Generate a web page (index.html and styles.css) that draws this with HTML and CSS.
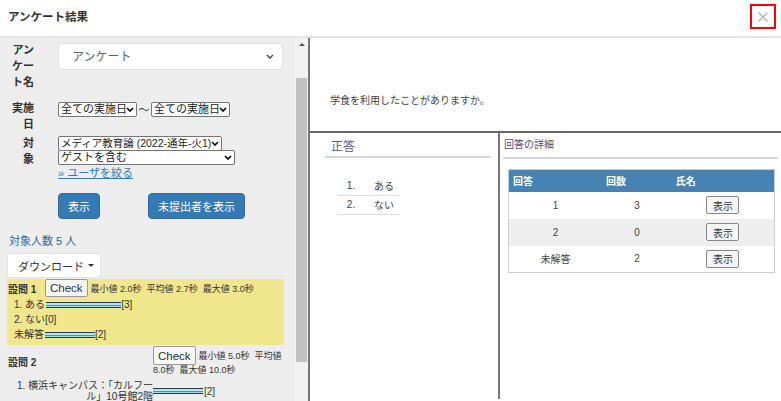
FILE: index.html
```html
<!DOCTYPE html>
<html lang="ja">
<head>
<meta charset="utf-8">
<title>アンケート結果</title>
<link rel="stylesheet" href="styles.css">
</head>
<body>
<div class="header">
  <h1 class="title">アンケート結果</h1>
  <button class="close" type="button" aria-label="閉じる">
    <svg width="12" height="12" viewBox="0 0 12 12"><path d="M1.5 1.5l9 9M10.5 1.5l-9 9" stroke="#bbb" stroke-width="1.6" fill="none"/></svg>
  </button>
</div>
<div class="main">
  <div class="left">
    <div class="lc">
      <div class="frow r1">
        <div class="flabel">アンケート名</div>
        <select class="big"><option>アンケート</option></select>
      </div>
      <div class="frow r2">
        <div class="flabel">実施日</div>
        <div class="dates">
          <select class="sm date"><option>全ての実施日</option></select>
          <span class="tilde">〜</span>
          <select class="sm date"><option>全ての実施日</option></select>
        </div>
      </div>
      <div class="frow r3">
        <div class="flabel">対<br>象</div>
        <div class="fcol">
          <select class="sm course"><option>メディア教育論 (2022-通年-火1)</option></select>
          <select class="sm guest"><option>ゲストを含む</option></select>
          <a class="filter" href="#">» ユーザを絞る</a>
        </div>
      </div>
      <div class="actions">
        <button class="btn-blue" type="button">表示</button>
        <button class="btn-blue" type="button">未提出者を表示</button>
      </div>
      <div class="count">対象人数 5 人</div>
      <button class="dl" type="button">ダウンロード <span class="caret"></span></button>
      <div class="q q1">
        <div class="qhead">
          <span class="qtitle">設問 1</span>
          <button class="check" type="button">Check</button>
          <span class="stats">最小値 2.0秒&nbsp; 平均値 2.7秒&nbsp; 最大値 3.0秒</span>
        </div>
        <div class="opt">1. ある<span class="bar" style="width:75px"></span>[3]</div>
        <div class="opt">2. ない[0]</div>
        <div class="opt">未解答<span class="bar" style="width:50px"></span>[2]</div>
      </div>
      <div class="q q2">
        <div class="qhead2">
          <span class="qtitle">設問 2</span>
          <div class="qright">
            <div class="qr1"><button class="check" type="button">Check</button><span class="stats">最小値 5.0秒&nbsp; 平均値</span></div>
            <div class="qr2">8.0秒&nbsp; 最大値 10.0秒</div>
          </div>
        </div>
        <div class="opt2">
          <div class="optlabel">1. 横浜キャンパス：「カルフー<br>ル」10号館2階</div>
          <span class="bar" style="width:50px"></span><span class="cnt">[2]</span>
        </div>
      </div>
    </div>
    <div class="sb">
      <div class="sb-arrow"></div>
      <div class="sb-thumb"></div>
    </div>
  </div>
  <div class="right">
    <div class="question">学食を利用したことがありますか。</div>
    <div class="lower">
      <div class="correct">
        <h2 class="chead">正答</h2>
        <table class="ans">
          <tr><td class="n">1.</td><td class="t">ある</td></tr>
          <tr><td class="n">2.</td><td class="t">ない</td></tr>
        </table>
      </div>
      <div class="detail">
        <h2 class="dhead">回答の詳細</h2>
        <table class="dt">
          <thead>
            <tr><th class="c1">回答</th><th class="c2">回数</th><th class="c3">氏名</th></tr>
          </thead>
          <tbody>
            <tr><td>1</td><td>3</td><td><button class="show" type="button">表示</button></td></tr>
            <tr class="alt"><td>2</td><td>0</td><td><button class="show" type="button">表示</button></td></tr>
            <tr><td>未解答</td><td>2</td><td><button class="show" type="button">表示</button></td></tr>
          </tbody>
        </table>
      </div>
    </div>
  </div>
</div>
</body>
</html>
```
FILE: styles.css
```css
* { box-sizing: border-box; }
html, body { margin: 0; padding: 0; }
body {
  width: 781px;
  height: 401px;
  overflow: hidden;
  background: #fff;
  color: #333;
  font-family: "Liberation Sans", "Noto Sans CJK JP", sans-serif;
  font-size: 11px;
}

/* header */
.header {
  height: 38px;
  border-bottom: 2px solid #e5e5e5;
  display: flex;
  justify-content: space-between;
  align-items: flex-start;
  padding: 0 5px 0 8px;
}
.title {
  margin: 9px 0 0;
  font-size: 11.5px;
  line-height: 16px;
  font-weight: bold;
  color: #333;
}
.close {
  margin-top: 4px;
  width: 26px;
  height: 25px;
  border: 2px solid #f00;
  background: #fff;
  padding: 0;
  display: flex;
  align-items: center;
  justify-content: center;
}

.main {
  display: flex;
  height: 363px;
}

/* left panel */
.left {
  width: 308px;
  flex: none;
  background: #ededed;
  display: flex;
}
.lc {
  flex: 1;
  padding: 5px 11px 0 7px;
  overflow: hidden;
}
.frow { display: flex; align-items: flex-start; }
.flabel {
  width: 27px;
  flex: none;
  margin-right: 24px;
  text-align: right;
  font-weight: bold;
  font-size: 11px;
  line-height: 16px;
  color: #333;
}
.r1 .flabel { margin-top: -1px; }
.r2 { margin-top: 10px; }
.r3 { margin-top: 3px; }

select {
  appearance: none;
  -webkit-appearance: none;
  font-family: "Liberation Sans", "Noto Sans CJK JP", sans-serif;
  color: #222;
  background-color: #fff;
  background-repeat: no-repeat;
  margin: 0;
}
.big {
  width: 225px;
  height: 27px;
  border: 1px solid #e0e0e0;
  border-radius: 4px;
  font-size: 12px;
  color: #666;
  padding: 0 20px 0 13px;
  background-image: url("data:image/svg+xml,%3Csvg xmlns='http://www.w3.org/2000/svg' width='8' height='5'%3E%3Cpath d='M1 1l3 3 3-3' fill='none' stroke='%23444' stroke-width='1.4'/%3E%3C/svg%3E");
  background-position: right 8px center;
}
.sm {
  height: 15px;
  border: 1px solid #767676;
  border-radius: 2px;
  font-size: 11px;
  line-height: 13px;
  padding: 0 10px 0 2px;
  background-image: url("data:image/svg+xml,%3Csvg xmlns='http://www.w3.org/2000/svg' width='8' height='5'%3E%3Cpath d='M1 1l3 3 3-3' fill='none' stroke='%23000' stroke-width='1.6'/%3E%3C/svg%3E");
  background-position: right 2px center;
}
.dates { display: flex; align-items: center; margin-top: 2px; }
.date { width: 79px; }
.tilde { width: 14px; text-align: center; font-size: 11px; line-height: 14px; }
.fcol { display: flex; flex-direction: column; align-items: flex-start; }
.course { width: 164px; margin-top: 1px; font-size: 10.5px; }
.guest { width: 177px; margin-top: -1px; }
.filter {
  margin-top: 1px;
  font-size: 11px;
  line-height: 14px;
  color: #337ab7;
  text-decoration: underline;
}

.actions {
  display: flex;
  gap: 48px;
  margin: 13px 0 0 51px;
}
.btn-blue {
  height: 26px;
  padding: 0 9px;
  background: #337ab7;
  border: 1px solid #2e6da4;
  border-radius: 4px;
  color: #fff;
  font-family: inherit;
  font-size: 11px;
}
.count {
  margin-top: 14px;
  font-size: 11px;
  line-height: 16px;
  color: #31659a;
  padding-left: 2px;
}
.dl {
  display: flex;
  align-items: center;
  margin-top: 4px;
  height: 25px;
  width: 94px;
  padding: 0 0 0 10px;
  background: #fff;
  border: 1px solid #e2e2e2;
  border-radius: 3px;
  font-family: inherit;
  font-size: 11px;
  color: #333;
}
.caret {
  display: inline-block;
  margin-left: 4px;
  border-left: 3px solid transparent;
  border-right: 3px solid transparent;
  border-top: 3px solid #333;
}

.q1 {
  margin-top: 1px;
  background: #f0e68c;
  padding: 0 0 3px 1px;
}
.qhead { display: flex; align-items: center; height: 18px; }
.qtitle { font-weight: bold; font-size: 10px; width: 37px; flex: none; }
.check {
  height: 18px;
  padding: 0 4px;
  background: #f7f7f7;
  border: 1px solid #999;
  border-radius: 2px;
  font-family: "Liberation Sans", sans-serif;
  font-size: 11.5px;
  color: #333;
}
.stats { font-size: 9px; margin-left: 3px; color: #333; }
.opt {
  font-size: 10px;
  line-height: 15px;
  padding-left: 6px;
  display: flex;
  align-items: center;
}
.bar {
  display: inline-block;
  height: 6px;
  background: linear-gradient(to bottom, #1d3b48 0 1px, #b4e3ec 1px 3px, #4d93a6 3px 4px, #a9dce6 4px 5px, #1d3b48 5px 6px);
}
.opt .bar { margin-left: 1px; }

.q2 { margin-top: 1px; }
.qhead2 { display: flex; align-items: center; }
.qhead2 .qtitle { width: 146px; padding-left: 1px; }
.qright { width: 131px; }
.qr1 { display: flex; align-items: center; height: 19px; }
.qr1 .check { height: 19px; }
.qr2 { font-size: 9px; line-height: 11px; }
.opt2 {
  margin-top: 4px;
  display: flex;
  align-items: center;
  font-size: 10px;
  line-height: 11px;
}
.optlabel { width: 146px; flex: none; text-align: right; }
.cnt { margin-left: 1px; }

/* scrollbar */
.sb {
  width: 13px;
  flex: none;
  background: #f1f1f1;
  display: flex;
  flex-direction: column;
  align-items: center;
}
.sb-arrow {
  margin-top: 5px;
  width: 0;
  height: 0;
  border-left: 3px solid transparent;
  border-right: 3px solid transparent;
  border-bottom: 3px solid #505050;
}
.sb-thumb {
  margin-top: 32px;
  width: 11px;
  height: 284px;
  background: #c1c1c1;
}

/* right panel */
.right {
  flex: 1;
  border-left: 2px solid #777;
  display: flex;
  flex-direction: column;
}
.question {
  height: 95px;
  flex: none;
  border-bottom: 2px solid #666;
  padding: 56px 0 0 20px;
  font-size: 10px;
  line-height: 14px;
  color: #444;
}
.lower {
  flex: 1;
  display: flex;
  margin-bottom: 2px;
}
.correct {
  width: 190px;
  flex: none;
  border-right: 2px solid #777;
  padding: 6px 7px 0 15px;
}
.chead {
  margin: 0;
  padding: 0 0 1px 6px;
  font-size: 12px;
  font-weight: normal;
  line-height: 16px;
  color: #5b5b8f;
  border-bottom: 2px solid #d6d6d6;
}
.ans {
  border-collapse: collapse;
  margin: 18px 0 0 13px;
  font-size: 10px;
  color: #444;
}
.ans td { height: 19px; border-bottom: 1px solid #ddd; padding: 0; }
.ans .n { width: 26px; text-align: center; }
.ans .t { width: 35px; padding-left: 10px; }

.detail {
  flex: 1;
  padding: 5px 3px 0 3px;
}
.dhead {
  margin: 0;
  padding: 0 0 5px 1px;
  font-size: 10px;
  font-weight: normal;
  line-height: 14px;
  color: #4f4f6f;
  border-bottom: 2px solid #d6d6d6;
}
.dt {
  margin: 10px 0 0 5px;
  width: 267px;
  border-collapse: collapse;
  border: 1px solid #ccc;
  font-size: 10px;
  color: #444;
}
.dt th {
  background: #4682b4;
  color: #fff;
  font-weight: bold;
  text-align: left;
  height: 22px;
  padding: 0 0 0 4px;
}
.dt .c1 { width: 94px; }
.dt .c2 { width: 70px; }
.dt .c3 { width: 103px; }
.dt td { height: 27px; text-align: center; padding: 0; }
.dt .alt td { background: #eee; }
.show {
  height: 18px;
  width: 33px;
  padding: 0;
  background: #f5f5f5;
  border: 1px solid #888;
  border-radius: 2px;
  font-family: inherit;
  font-size: 10px;
  color: #333;
}
```
